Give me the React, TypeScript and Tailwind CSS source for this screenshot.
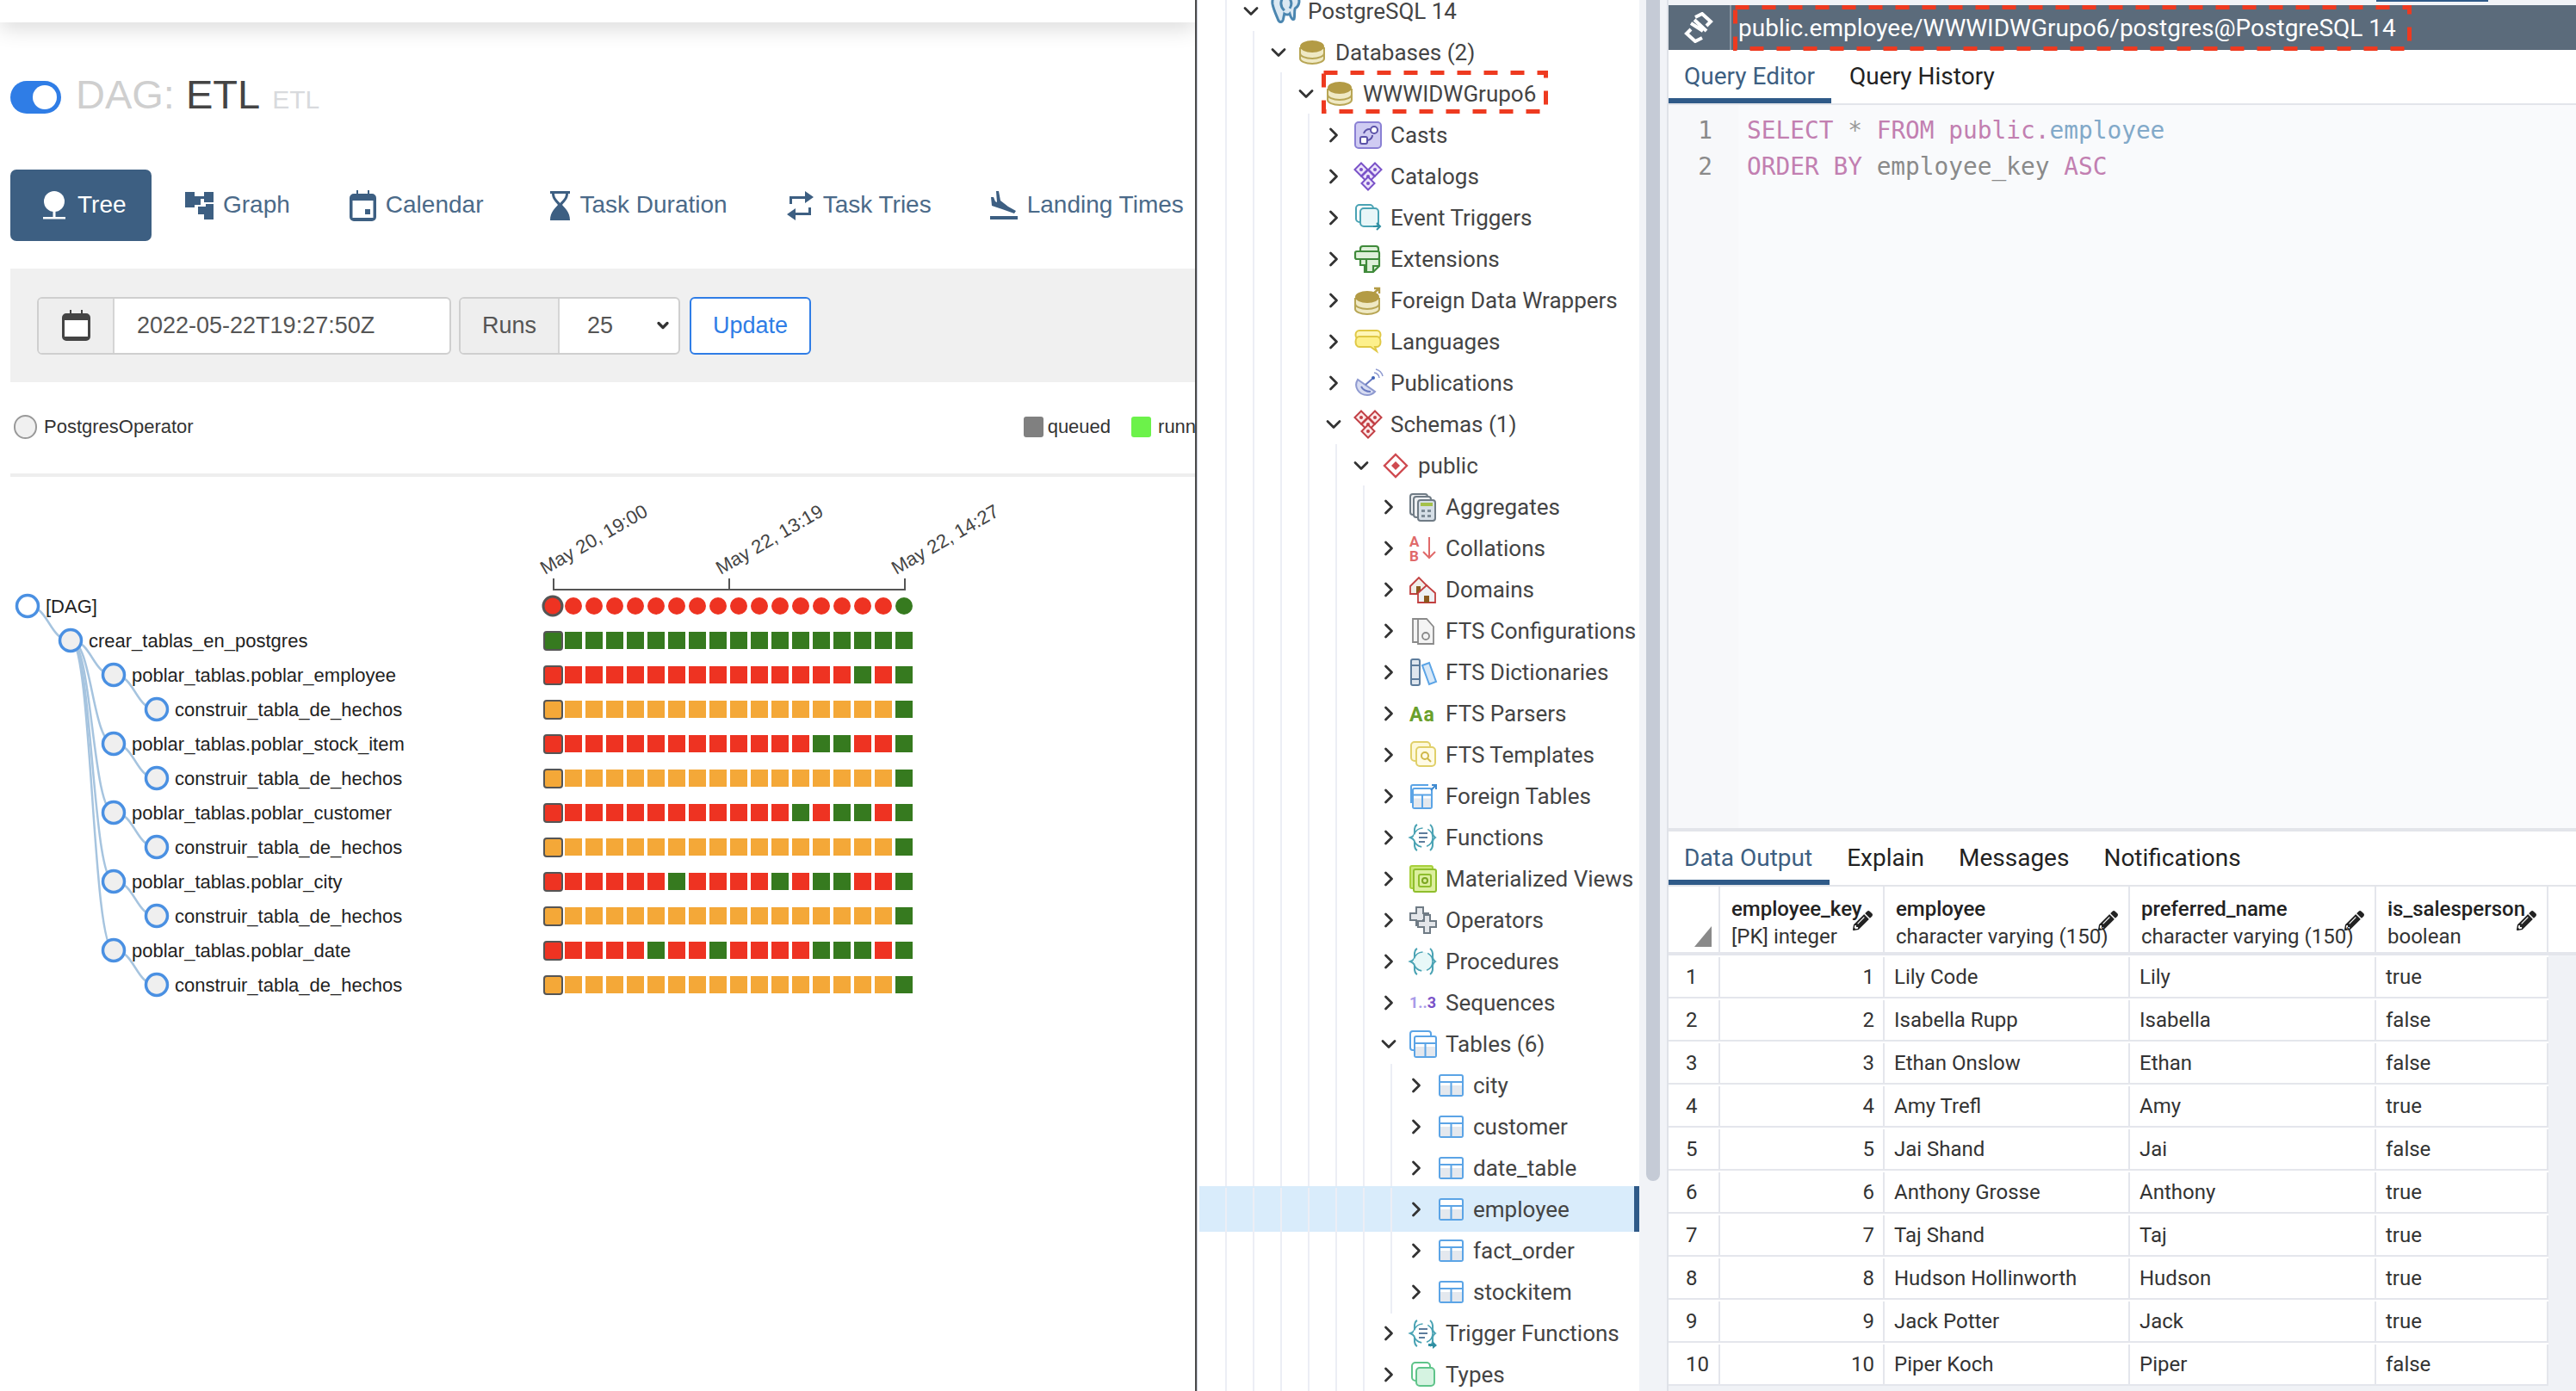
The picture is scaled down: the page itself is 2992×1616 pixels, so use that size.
import { ChevronDown, ChevronRight } from "lucide-react";
import { FaPencilAlt } from "react-icons/fa";

const NAVY = "#3d5f82";
const RED = "#ee3322";
const GREEN = "#367a1f";
const ORANGE = "#f4a838";

/* ---------- airflow side ---------- */

function NavIcon({ name }: { name: string }) {
  if (name === "tree")
    return (
      <svg width="28" height="34" viewBox="0 0 28 34" fill="#fff">
        <ellipse cx="14" cy="12" rx="12" ry="12" />
        <rect x="12.5" y="20" width="3" height="11" />
        <rect x="1" y="30" width="26" height="2.5" />
      </svg>
    );
  if (name === "graph")
    return (
      <svg width="33" height="32" viewBox="0 0 33 32" fill={NAVY}>
        <path d="M0 0h11v5h11V0h11v12H22V8h-4v9h6v-3h9v18H22v-6h-7v-9h3v-2h-7v3H0z" />
      </svg>
    );
  if (name === "calendar")
    return (
      <svg width="31" height="36" viewBox="0 0 31 36">
        <path d="M5 4h3V0h2v4h11V0h2v4h3a5 5 0 0 1 5 5v22a5 5 0 0 1-5 5H5a5 5 0 0 1-5-5V9a5 5 0 0 1 5-5z" fill={NAVY} />
        <rect x="3.5" y="12" width="24" height="20" fill="#fff" />
        <rect x="18" y="22" width="6" height="6" fill={NAVY} />
      </svg>
    );
  if (name === "hourglass")
    return (
      <svg width="23" height="34" viewBox="0 0 23 34" fill={NAVY}>
        <path d="M0 0h23v3h-2c0 6-4 9-7 13 3 4 9 8 9 18H0c0-10 6-14 9-18C6 12 2 9 2 3H0zm5 3c0 5 4 8 6.500 11C14 11 18 8 18 3z" fillRule="evenodd" />
      </svg>
    );
  if (name === "retweet")
    return (
      <svg width="31" height="34" viewBox="0 0 31 34" fill={NAVY}>
        <path d="M3 6h18V0l10 7-10 7V9H6v6H3zM28 28H10v6L0 27l10-7v5h15v-6h3z" />
      </svg>
    );
  return (
    <svg width="32" height="34" viewBox="0 0 32 34" fill={NAVY}>
      <path d="M7 0h3l2 11 9 7 9 5-2 3-14-5-12-4-1-10h3l2 5 2 1z" />
      <rect x="0" y="29" width="32" height="4" />
    </svg>
  );
}

const navItems = [
  { icon: "graph", label: "Graph", gap: "ml-[39px]" },
  { icon: "calendar", label: "Calendar", gap: "ml-[69px]" },
  { icon: "hourglass", label: "Task Duration", gap: "ml-[78px]" },
  { icon: "retweet", label: "Task Tries", gap: "ml-[69px]" },
  { icon: "plane", label: "Landing Times", gap: "ml-[68px]" },
];

function TreeChart() {
  const colX = Array.from({ length: 18 }, (_, i) => 642 + 24 * i);
  const g = (list: number[]) => colX.map((_, i) => (list.includes(i) ? GREEN : RED));
  const orange = colX.map((_, i) => (i === 17 ? GREEN : ORANGE));
  const rows = [
    { label: "[DAG]", x: 32, colors: g([17]), root: true },
    { label: "crear_tablas_en_postgres", x: 82, colors: colX.map(() => GREEN), parent: 0 },
    { label: "poblar_tablas.poblar_employee", x: 132, colors: g([15, 17]), parent: 1 },
    { label: "construir_tabla_de_hechos", x: 182, colors: orange, parent: 2 },
    { label: "poblar_tablas.poblar_stock_item", x: 132, colors: g([13, 14, 17]), parent: 1 },
    { label: "construir_tabla_de_hechos", x: 182, colors: orange, parent: 4 },
    { label: "poblar_tablas.poblar_customer", x: 132, colors: g([12, 14, 15, 17]), parent: 1 },
    { label: "construir_tabla_de_hechos", x: 182, colors: orange, parent: 6 },
    { label: "poblar_tablas.poblar_city", x: 132, colors: g([6, 11, 13, 14, 17]), parent: 1 },
    { label: "construir_tabla_de_hechos", x: 182, colors: orange, parent: 8 },
    { label: "poblar_tablas.poblar_date", x: 132, colors: g([5, 8, 13, 14, 15, 17]), parent: 1 },
    { label: "construir_tabla_de_hechos", x: 182, colors: orange, parent: 10 },
  ];
  const rowY = (i: number) => 704 + 40 * i;

  return (
    <svg width="1388" height="640" viewBox="0 554 1388 640" className="block font-['Liberation_Sans',sans-serif]">
      {["May 20, 19:00", "May 22, 13:19", "May 22, 14:27"].map((t, i) => (
        <text key={t} transform={`translate(${633 + 204 * i} 668) rotate(-30)`} fontSize="22" fill="#444">
          {t}
        </text>
      ))}
      <path d="M643 672V685H1051V672M847 672V685" fill="none" stroke="#555" strokeWidth="2" />

      {rows.map((r, i) => {
        if (r.parent === undefined) return null;
        const px = rows[r.parent].x;
        const mid = (px + r.x) / 2;
        const py = rowY(r.parent);
        const y = rowY(i);
        return (
          <path key={i} d={`M${px} ${py}C${mid} ${py} ${mid} ${y} ${r.x} ${y}`} fill="none" stroke="#a6c4df" strokeWidth="2.5" />
        );
      })}

      {rows.map((r, i) => (
        <g key={i}>
          <circle cx={r.x} cy={rowY(i)} r="12.5" fill={r.root ? "#fff" : "#efefef"} stroke="#4a90e2" strokeWidth="3.5" />
          <text x={r.x + 21} y={rowY(i) + 8} fontSize="22" fill="#222">
            {r.label}
          </text>
          {r.colors.map((c, j) =>
            r.root ? (
              <circle
                key={j}
                cx={colX[j]}
                cy={rowY(i)}
                r={j === 0 ? 11 : 10}
                fill={c}
                stroke={j === 0 ? "#555" : "none"}
                strokeWidth="3"
              />
            ) : (
              <rect
                key={j}
                x={colX[j] - 10}
                y={rowY(i) - 10}
                width={j === 0 ? 21 : 20}
                height={j === 0 ? 21 : 20}
                rx={j === 0 ? 3 : 0}
                fill={c}
                stroke={j === 0 ? "#555" : "none"}
                strokeWidth="2"
              />
            ),
          )}
        </g>
      ))}
    </svg>
  );
}

function AirflowPanel() {
  return (
    <div className="w-[1390px] h-full shrink-0 overflow-hidden bg-white border-r-2 border-[#4a4a4a] font-['Liberation_Sans',sans-serif]">
      <div className="h-[26px] bg-white shadow-[0_6px_26px_rgba(0,0,0,0.16)]" />

      <div className="mt-[68px] ml-[12px] flex items-center h-[38px]">
        <div className="w-[59px] h-[38px] rounded-full bg-[#2f7de6] flex items-center justify-end pr-[5px]">
          <div className="w-[28px] h-[28px] rounded-full bg-white" />
        </div>
        <div className="ml-[17px] flex items-baseline text-[47px] leading-[38px] text-[#cfcfcf] whitespace-nowrap">
          DAG:
          <span className="ml-[13px] text-[#444]">ETL</span>
          <span className="ml-[14px] text-[30px] text-[#d8dadd]">ETL</span>
        </div>
      </div>

      <div className="mt-[65px] ml-[12px] flex items-center text-[28px] whitespace-nowrap">
        <div className="h-[83px] w-[164px] rounded-[7px] bg-[#3d5f82] flex items-center gap-[13px] pl-[37px] text-white">
          <NavIcon name="tree" />
          <span className="pb-[2px]">Tree</span>
        </div>
        {navItems.map((item) => (
          <div key={item.label} className={`${item.gap} flex items-center gap-[11px] text-[#4b6a89]`}>
            <NavIcon name={item.icon} />
            <span className="pb-[2px]">{item.label}</span>
          </div>
        ))}
      </div>

      <div className="mt-[32px] ml-[12px] h-[132px] bg-[#f0f0f0] flex items-center pl-[31px] text-[27px] text-[#555]">
        <div className="flex h-[67px] w-[481px] rounded-[6px] border-2 border-[#cfcfcf] bg-white overflow-hidden">
          <div className="w-[88px] flex items-center justify-center bg-[#eeeeee] border-r-2 border-[#d5d5d5]">
            <svg width="33" height="36" viewBox="0 0 33 36">
              <path d="M5 4h4V0h2v4h11V0h2v4h4a5 5 0 0 1 5 5v22a5 5 0 0 1-5 5H5a5 5 0 0 1-5-5V9a5 5 0 0 1 5-5z" fill="#444" />
              <rect x="3" y="12" width="27" height="19" fill="#fff" />
            </svg>
          </div>
          <div className="flex items-center pl-[26px]">2022-05-22T19:27:50Z</div>
        </div>
        <div className="ml-[9px] flex h-[67px] w-[257px] rounded-[6px] border-2 border-[#cfcfcf] bg-white overflow-hidden">
          <div className="w-[115px] flex items-center justify-center bg-[#eeeeee] border-r-2 border-[#d5d5d5]">Runs</div>
          <div className="flex-1 flex items-center pl-[32px] pr-[8px] justify-between">
            25
            <ChevronDown size={20} strokeWidth={4} className="text-[#333]" />
          </div>
        </div>
        <div className="ml-[11px] w-[141px] h-[67px] rounded-[6px] border-2 border-[#2f7de6] bg-white text-[#2f7de6] flex items-center justify-center">
          Update
        </div>
      </div>

      <div className="mt-[38px] flex items-center h-[28px] text-[22px] text-[#333] whitespace-nowrap">
        <div className="ml-[16px] w-[27px] h-[28px] shrink-0 rounded-full bg-[#f0f0f0] border-2 border-[#999]" />
        <span className="ml-[8px] pb-[2px]">PostgresOperator</span>
        <div className="ml-[964px] w-[23px] h-[24px] rounded-[3px] bg-[#808080] shrink-0" />
        <span className="ml-[5px] pb-[2px]">queued</span>
        <div className="ml-[24px] w-[23px] h-[24px] rounded-[3px] bg-[#6cf24a] shrink-0" />
        <span className="ml-[8px] pb-[2px]">running</span>
      </div>

      <div className="mt-[40px] ml-[12px] h-[4px] bg-[#eeeeee]" />
      <TreeChart />
    </div>
  );
}

/* red dashed note drawn over the screenshot */
function DashedBox({ w, h, className }: { w: number; h: number; className: string }) {
  return (
    <svg width={w} height={h} className={`absolute ${className}`}>
      <rect x="2.500" y="2.500" width={w - 5} height={h - 5} fill="none" stroke="#ee3a20" strokeWidth="5" strokeDasharray="16 15" />
    </svg>
  );
}

/* ---------- pgadmin browser tree ---------- */

function Diamonds({ stroke, fill }: { stroke: string; fill: string }) {
  const spots = [
    [8, 8],
    [24, 8],
    [16, 16],
    [16, 24],
  ];
  return (
    <>
      {spots.map(([x, y]) => (
        <g key={`${x}${y}`}>
          <path d={`M${x} ${y - 7.500}l7.500 7.500-7.500 7.500-7.500-7.500z`} fill={fill} stroke={stroke} strokeWidth="2" />
          <circle cx={x} cy={y} r="2" fill={stroke} />
        </g>
      ))}
    </>
  );
}

function Stack({ y = 0 }: { y?: number }) {
  return (
    <g transform={`translate(0 ${y})`}>
      <path d="M1 18v5c0 3 6 6 14 6s14-3 14-6v-5z" fill="#efe9c4" stroke="#b8a655" strokeWidth="2" />
      <path d="M1 11v6c0 3 6 6 14 6s14-3 14-6v-6z" fill="#efe9c4" stroke="#b8a655" strokeWidth="2" />
      <ellipse cx="15" cy="9" rx="14" ry="7" fill="#b39b45" />
    </g>
  );
}

function TableGlyph({ x = 0, y = 0, w = 27, h = 24 }: { x?: number; y?: number; w?: number; h?: number }) {
  return (
    <g transform={`translate(${x} ${y})`}>
      <rect x="1" y="1" width={w} height={h} rx="2" fill="#fff" stroke="#5ba4e6" strokeWidth="2" />
      <rect x="2" y={h / 2 + 1} width={w - 2} height={h / 2 - 1} fill="#e4e8ee" />
      <path d={`M1 ${h / 2 - 3}H${w + 1}M${w / 2 + 1} ${h / 2 - 3}V${h}`} stroke="#5ba4e6" strokeWidth="2" />
    </g>
  );
}

function Layers({ stroke, fill }: { stroke: string; fill: string }) {
  return (
    <>
      <rect x="3" y="2" width="21" height="21" rx="4" fill="#fff" stroke={stroke} strokeWidth="2" />
      <rect x="8" y="8" width="21" height="21" rx="4" fill={fill} stroke={stroke} strokeWidth="2" />
    </>
  );
}

function TreeIcon({ name }: { name: string }) {
  const body = (() => {
    switch (name) {
      case "server":
        return (
          <g fill="#dbe8f2" stroke="#4b86b0" strokeWidth="2.400" transform="translate(-4 -6) scale(1.250)">
            <path d="M16 2C8 0 3 4 4 11c1 5 3 9 5 14 1 3 4 4 5 0l1-5c2 1 4 1 5 0 1 4 3 6 4 5 1-3 0-7 1-10 4-2 5-8 2-11-3-2-7-3-11-2z" />
            <path d="M13 6c-2 4-1 8 2 11M20 6c2 3 2 6 0 9" fill="none" />
          </g>
        );
      case "db":
        return <Stack />;
      case "casts":
        return (
          <>
            <rect x="1" y="1" width="30" height="30" rx="4" fill="#cfcbf2" stroke="#8a80d4" strokeWidth="2" />
            <circle cx="23" cy="10" r="4" fill="#fff" stroke="#5b52a8" strokeWidth="2" />
            <rect x="7" y="18" width="8" height="8" rx="2" fill="#fff" stroke="#5b52a8" strokeWidth="2" />
            <path d="M11 14c1-3 4-5 7-5M21 16c0 3-2 5-5 6" fill="none" stroke="#5b52a8" strokeWidth="2" />
          </>
        );
      case "catalogs":
        return <Diamonds stroke="#7a52c8" fill="#ece4fa" />;
      case "schemas":
        return <Diamonds stroke="#c23f45" fill="#fbe7e7" />;
      case "public":
        return (
          <>
            <path d="M16 3l13 13-13 13L3 16z" fill="#fff" stroke="#cf4a50" strokeWidth="2.400" />
            <path d="M16 11l5 5-5 5-5-5z" fill="#cf4a50" />
          </>
        );
      case "event":
        return (
          <>
            <rect x="2" y="1" width="20" height="20" rx="4" fill="#fff" stroke="#4aa3b4" strokeWidth="2" />
            <rect x="7" y="5" width="21" height="21" rx="4" fill="#e8f6f8" stroke="#4aa3b4" strokeWidth="2" />
            <path d="M22 26h7m-3-4l4 4-4 4" fill="none" stroke="#2f8fa2" strokeWidth="2" />
          </>
        );
      case "extensions":
        return (
          <g fill="#dff0da" stroke="#3f8a3a" strokeWidth="2.200">
            <rect x="7" y="1" width="21" height="12" rx="3" />
            <rect x="1" y="7" width="28" height="9" rx="2" />
            <path d="M7 16h22v8l-7 7H12v-8H7z" />
            <path d="M14 16v15M22 31v-7h7" fill="none" />
          </g>
        );
      case "fdw":
        return (
          <>
            <Stack y={3} />
            <path d="M21 9l8-7m-6 0h6v6" fill="none" stroke="#b39b45" strokeWidth="2.400" />
          </>
        );
      case "languages":
        return (
          <g stroke="#e0c845" strokeWidth="2">
            <path d="M6 3h20c6 0 6 10 0 10H6C0 13 0 3 6 3z" fill="#fff6b8" />
            <path d="M6 10h20c6 0 6 12 0 12h-2l2 5-7-5H6C0 22 0 10 6 10z" fill="#fdf08c" />
          </g>
        );
      case "publications":
        return (
          <>
            <path d="M4 12c-5 8 1 18 11 18 4 0 7-2 9-4z" fill="#d7dcf2" stroke="#8f9ad0" strokeWidth="2" />
            <path d="M8 20c2 4 6 6 11 6M13 18l8-7" fill="none" stroke="#6a7ac0" strokeWidth="2" />
            <circle cx="22" cy="10" r="2" fill="#3f62b8" />
            <path d="M23 4c3 0 6 3 6 6M25 0c4 1 7 4 8 8" fill="none" stroke="#8f9ad0" strokeWidth="1.500" />
          </>
        );
      case "aggregates":
        return (
          <>
            <rect x="1" y="1" width="20" height="24" rx="3" fill="#eef0f2" stroke="#6f7b85" strokeWidth="2" />
            <rect x="5" y="4" width="20" height="24" rx="3" fill="#eef0f2" stroke="#6f7b85" strokeWidth="2" />
            <rect x="10" y="8" width="20" height="24" rx="3" fill="#d5dee6" stroke="#6f7b85" strokeWidth="2" />
            <rect x="13" y="11" width="14" height="4" fill="#a4c14a" />
            <path d="M14 19h4v3h-4zM21 19h4v3h-4zM14 25h4v3h-4zM21 25h4v3h-4z" fill="#7d8b96" />
          </>
        );
      case "collations":
        return (
          <>
            <text x="0" y="14" fontSize="17" fontWeight="700" fill="#e06a6a" fontFamily="Roboto, sans-serif">A</text>
            <text x="0" y="31" fontSize="17" fontWeight="700" fill="#e06a6a" fontFamily="Roboto, sans-serif">B</text>
            <path d="M23 3v24m-7-7l7 7 7-7" fill="none" stroke="#e06a6a" strokeWidth="2" />
          </>
        );
      case "domains":
        return (
          <>
            <path d="M1 12L11 2l10 10v9H1z" fill="#f1eee8" stroke="#c23f3f" strokeWidth="1.800" />
            <rect x="8" y="12" width="5" height="9" fill="#8a5a1e" />
            <path d="M10 20L20 11l10 9v11H10z" fill="#eef1f4" stroke="#c23f3f" strokeWidth="1.800" />
            <rect x="17" y="23" width="6" height="8" fill="#8a5a1e" />
          </>
        );
      case "ftsconfig":
        return (
          <g fill="#f4f4f4" stroke="#8a8a8a" strokeWidth="1.800">
            <path d="M4 2h12v27H4z" />
            <path d="M10 2h10l8 9v20H10z" />
            <circle cx="19" cy="22" r="4" fill="none" />
          </g>
        );
      case "ftsdict":
        return (
          <>
            <rect x="2" y="1" width="10" height="30" rx="2" fill="#dfe6ee" stroke="#5d7c9c" strokeWidth="2" />
            <path d="M2 8h10M2 24h10" stroke="#5d7c9c" strokeWidth="2" />
            <path d="M15 8l8-3 8 22-8 3z" fill="#d7e8f8" stroke="#5ba4e6" strokeWidth="2" />
          </>
        );
      case "ftsparsers":
        return (
          <text x="0" y="25" fontSize="23" fontWeight="700" letterSpacing="1" fill="#6aa02c" fontFamily="Roboto, sans-serif">Aa</text>
        );
      case "ftstemplates":
        return (
          <>
            <rect x="2" y="1" width="22" height="22" rx="4" fill="#fdf8d8" stroke="#e0d06a" strokeWidth="2" />
            <rect x="8" y="7" width="22" height="22" rx="4" fill="#fffbe6" stroke="#e0d06a" strokeWidth="2" />
            <circle cx="18" cy="17" r="4" fill="none" stroke="#cfb84a" strokeWidth="2" />
            <path d="M21 20l4 4" stroke="#cfb84a" strokeWidth="2" />
          </>
        );
      case "foreign":
        return (
          <>
            <path d="M2 24V5a2 2 0 0 1 2-2h18" fill="none" stroke="#5ba4e6" strokeWidth="2" />
            <TableGlyph x={3} y={6} w={22} h={23} />
            <path d="M25 9l6-6m-5 0h5v5" fill="none" stroke="#3f8ad0" strokeWidth="2" />
          </>
        );
      case "functions":
      case "trigfn":
      case "procedures":
        return (
          <>
            <path d="M9 1C5 3 6 8 6 11c0 3-5 5-5 5s5 2 5 5c0 3-1 8 3 10" fill="none" stroke="#4aa3b4" strokeWidth="2" />
            <circle cx="16" cy="16" r="11" fill={name === "procedures" ? "#e8f8f8" : "#fff"} stroke="#4aa3b4" strokeWidth="1.600" strokeDasharray="13 6" />
            <path d="M24 1c4 3 3 7 3 10 0 3 3 5 3 5s-3 2-3 5 1 7-3 10" fill="none" stroke="#4aa3b4" strokeWidth="2" />
            {name !== "procedures" && <path d="M11 11h10M11 16h10M11 21h7" stroke="#5d7c9c" strokeWidth="2" />}
            {name === "trigfn" && <path d="M22 28h5v-3l5 5-5 4v-3h-5z" fill="#2f8fa2" />}
          </>
        );
      case "matviews":
        return (
          <>
            <rect x="1" y="1" width="26" height="26" rx="2" fill="#cbe87a" stroke="#a8d03c" strokeWidth="2" />
            <rect x="5" y="5" width="26" height="26" rx="2" fill="#dcef9e" stroke="#8fbe2c" strokeWidth="2" />
            <rect x="11" y="11" width="14" height="14" rx="2" fill="none" stroke="#8fbe2c" strokeWidth="2" />
            <circle cx="18" cy="18" r="3" fill="none" stroke="#7aa520" strokeWidth="2" />
          </>
        );
      case "operators":
        return (
          <g fill="#e3e6ea" stroke="#6f7b85" strokeWidth="2">
            <path d="M8 1h8v7h6v8h-6v6H8v-6H1V8h7z" />
            <path d="M17 10h7v7h7v7h-7v7h-7v-7h-7v-7h7z" />
          </g>
        );
      case "sequences":
        return (
          <text x="0" y="22" fontSize="18" fontWeight="700" fontFamily="Roboto, sans-serif">
            <tspan fill="#a89ae8">1..</tspan>
            <tspan fill="#7a52c8">3</tspan>
          </text>
        );
      case "tables":
        return (
          <>
            <rect x="1" y="1" width="24" height="22" rx="3" fill="#fff" stroke="#5ba4e6" strokeWidth="2" />
            <TableGlyph x={5} y={6} w={25} h={24} />
          </>
        );
      case "table":
        return <TableGlyph x={2} y={3} />;
      case "types":
        return <Layers stroke="#5fc48a" fill="#d5f3e1" />;
      default:
        return null;
    }
  })();
  return (
    <svg width="32" height="32" viewBox="0 0 32 32" className="overflow-visible">
      {body}
    </svg>
  );
}

type Node = { d: number; label: string; icon: string; open?: boolean; selected?: boolean; boxed?: boolean };

const nodes: Node[] = [
  { d: 0, label: "PostgreSQL 14", icon: "server", open: true },
  { d: 1, label: "Databases (2)", icon: "db", open: true },
  { d: 2, label: "WWWIDWGrupo6", icon: "db", open: true, boxed: true },
  { d: 3, label: "Casts", icon: "casts" },
  { d: 3, label: "Catalogs", icon: "catalogs" },
  { d: 3, label: "Event Triggers", icon: "event" },
  { d: 3, label: "Extensions", icon: "extensions" },
  { d: 3, label: "Foreign Data Wrappers", icon: "fdw" },
  { d: 3, label: "Languages", icon: "languages" },
  { d: 3, label: "Publications", icon: "publications" },
  { d: 3, label: "Schemas (1)", icon: "schemas", open: true },
  { d: 4, label: "public", icon: "public", open: true },
  { d: 5, label: "Aggregates", icon: "aggregates" },
  { d: 5, label: "Collations", icon: "collations" },
  { d: 5, label: "Domains", icon: "domains" },
  { d: 5, label: "FTS Configurations", icon: "ftsconfig" },
  { d: 5, label: "FTS Dictionaries", icon: "ftsdict" },
  { d: 5, label: "FTS Parsers", icon: "ftsparsers" },
  { d: 5, label: "FTS Templates", icon: "ftstemplates" },
  { d: 5, label: "Foreign Tables", icon: "foreign" },
  { d: 5, label: "Functions", icon: "functions" },
  { d: 5, label: "Materialized Views", icon: "matviews" },
  { d: 5, label: "Operators", icon: "operators" },
  { d: 5, label: "Procedures", icon: "procedures" },
  { d: 5, label: "Sequences", icon: "sequences" },
  { d: 5, label: "Tables (6)", icon: "tables", open: true },
  { d: 6, label: "city", icon: "table" },
  { d: 6, label: "customer", icon: "table" },
  { d: 6, label: "date_table", icon: "table" },
  { d: 6, label: "employee", icon: "table", selected: true },
  { d: 6, label: "fact_order", icon: "table" },
  { d: 6, label: "stockitem", icon: "table" },
  { d: 5, label: "Trigger Functions", icon: "trigfn" },
  { d: 5, label: "Types", icon: "types" },
];

function TreeRow({ node }: { node: Node }) {
  return (
    <div className="relative h-[48px] flex items-center whitespace-nowrap" style={{ paddingLeft: 48 + 32 * node.d }}>
      {node.selected && (
        <div className="absolute left-[2px] right-0 -top-[3px] -bottom-[2px] bg-[#d9ecfb] border-r-[6px] border-[#2f5a88]" />
      )}
      {Array.from({ length: node.d + 1 }, (_, i) => (
        <div key={i} className="absolute -top-px -bottom-px w-[2px] bg-[#eceef5]" style={{ left: 32 + 32 * i }} />
      ))}
      <div className="relative w-[28px] flex justify-center text-[#333]">
        {node.open ? <ChevronDown size={28} strokeWidth={2.4} /> : <ChevronRight size={28} strokeWidth={2.4} />}
      </div>
      <div className="relative ml-[10px] w-[32px] h-[32px]">
        <TreeIcon name={node.icon} />
      </div>
      <span className="relative ml-[10px] text-[#444]">{node.label}</span>
      {node.boxed && <DashedBox w={263} h={50} className="left-[144px] top-[-3px]" />}
    </div>
  );
}

function BrowserTree() {
  return (
    <div className="w-[546px] h-full shrink-0 overflow-hidden flex font-['Roboto',sans-serif] text-[26px] border-l border-[#c8ccd8]">
      <div className="w-[513px] -mt-[11px]">
        {nodes.map((n) => (
          <TreeRow key={n.label} node={n} />
        ))}
      </div>
      <div className="flex-1 bg-[#f1f3f7] pl-[8px]">
        <div className="w-[16px] h-[1372px] rounded-b-[8px] bg-[#c5cbd6]" />
      </div>
    </div>
  );
}

/* ---------- query tool ---------- */

function Tabs({ items, width }: { items: string[]; width: string }) {
  return (
    <div className="relative h-[64px] border-b-2 border-[#e3e5ea]">
      <div className="flex items-center h-[62px] pl-[18px] gap-[40px] text-[28px] text-[#222] whitespace-nowrap">
        {items.map((t, i) => (
          <span key={t} className={i === 0 ? "text-[#3d5f82]" : ""}>
            {t}
          </span>
        ))}
      </div>
      <div className={`absolute left-0 bottom-0 h-[6px] bg-[#2f5a88] ${width}`} />
    </div>
  );
}

const rows = [
  [1, "Lily Code", "Lily", "true"],
  [2, "Isabella Rupp", "Isabella", "false"],
  [3, "Ethan Onslow", "Ethan", "false"],
  [4, "Amy Trefl", "Amy", "true"],
  [5, "Jai Shand", "Jai", "false"],
  [6, "Anthony Grosse", "Anthony", "true"],
  [7, "Taj Shand", "Taj", "true"],
  [8, "Hudson Hollinworth", "Hudson", "true"],
  [9, "Jack Potter", "Jack", "true"],
  [10, "Piper Koch", "Piper", "false"],
];

const columns = [
  { name: "employee_key", type: "[PK] integer", w: "w-[191px]" },
  { name: "employee", type: "character varying (150)", w: "w-[285px]" },
  { name: "preferred_name", type: "character varying (150)", w: "w-[286px]" },
  { name: "is_salesperson", type: "boolean", w: "w-[200px]" },
];

function DataGrid() {
  return (
    <div className="flex-1 text-[24px] text-[#333] overflow-hidden bg-[#f0f2f6]">
      <div className="flex h-[80px] bg-white border-b-4 border-[#e4e6ec]">
        <div className="relative w-[60px] border-r-2 border-[#e4e6ec]">
          <div className="absolute right-[8px] bottom-[6px] border-l-[20px] border-b-[24px] border-l-transparent border-b-[#8a8a8a]" />
        </div>
        {columns.map((c) => (
          <div key={c.name} className={`relative ${c.w} border-r-2 border-[#e4e6ec] pl-[13px] pt-[10px] leading-[32px] whitespace-nowrap`}>
            <div className="font-medium text-[#222]">{c.name}</div>
            <div>{c.type}</div>
            <FaPencilAlt size={23} className="absolute right-[12px] top-[28px] text-[#222]" />
          </div>
        ))}
      </div>
      {rows.map((r) => (
        <div key={r[0]} className="flex h-[50px] w-[1022px] pt-[2px] bg-white border-b-2 border-[#e4e6ec] whitespace-nowrap">
          <div className="w-[60px] flex items-center pl-[20px] border-r-2 border-[#e4e6ec]">{r[0]}</div>
          <div className="w-[191px] flex items-center justify-end pr-[10px] border-r-2 border-[#e4e6ec]">{r[0]}</div>
          <div className="w-[285px] flex items-center pl-[11px] border-r-2 border-[#e4e6ec]">{r[1]}</div>
          <div className="w-[286px] flex items-center pl-[11px] border-r-2 border-[#e4e6ec]">{r[2]}</div>
          <div className="w-[200px] flex items-center pl-[11px] border-r-2 border-[#e4e6ec]">{r[3]}</div>
        </div>
      ))}
    </div>
  );
}

function QueryTool() {
  return (
    <div className="flex-1 h-full flex flex-col overflow-hidden bg-white font-['Roboto',sans-serif] border-l-2 border-[#dfe2e8]">
      <div className="h-[6px] bg-[#f1f3f7] flex justify-end pr-[102px]">
        <div className="w-[130px] h-[2px] bg-[#2f5a88]" />
      </div>
      <div className="relative h-[52px] bg-[#5b6b7b] flex items-center text-white text-[28px] whitespace-nowrap">
        <svg width="36" height="36" viewBox="0 0 36 36" fill="none" stroke="#fff" strokeWidth="4" className="ml-[17px]">
          <path d="M14 6l8-4 10 9-5 5M22 30l-8 4-10-9 5-5M9 13l14 9M13 9l14 13" />
        </svg>
        <div className="ml-[18px] w-[2px] h-full bg-[#8a97a3]" />
        <span className="ml-[8px] pt-[2px]">public.employee/WWWIDWGrupo6/postgres@PostgreSQL 14</span>
        <DashedBox w={788} h={53} className="left-[75px] top-0" />
      </div>
      <Tabs items={["Query Editor", "Query History"]} width="w-[189px]" />
      <div className="h-[844px] bg-[#f9fafc] flex font-['DejaVu_Sans_Mono',monospace] text-[27.8px] leading-[42px] border-b-[4px] border-[#e3e5ea]">
        <div className="w-[81px] bg-[#f7f8fa] pt-[9px] pr-[30px] text-right text-[#8a8a8a]">
          <div>1</div>
          <div>2</div>
        </div>
        <div className="pl-[10px] pt-[9px] whitespace-pre text-[#c27fb1]">
          <div>
            SELECT <span className="text-[#999]">*</span> FROM public.<span className="text-[#82a9c9]">employee</span>
          </div>
          <div>
            ORDER BY <span className="text-[#8a8a8a]">employee_key</span> ASC
          </div>
        </div>
      </div>
      <Tabs items={["Data Output", "Explain", "Messages", "Notifications"]} width="w-[187px]" />
      <DataGrid />
    </div>
  );
}

export default function App() {
  return (
    <div className="w-[2992px] h-[1616px] flex overflow-hidden bg-white">
      <AirflowPanel />
      <BrowserTree />
      <QueryTool />
    </div>
  );
}
